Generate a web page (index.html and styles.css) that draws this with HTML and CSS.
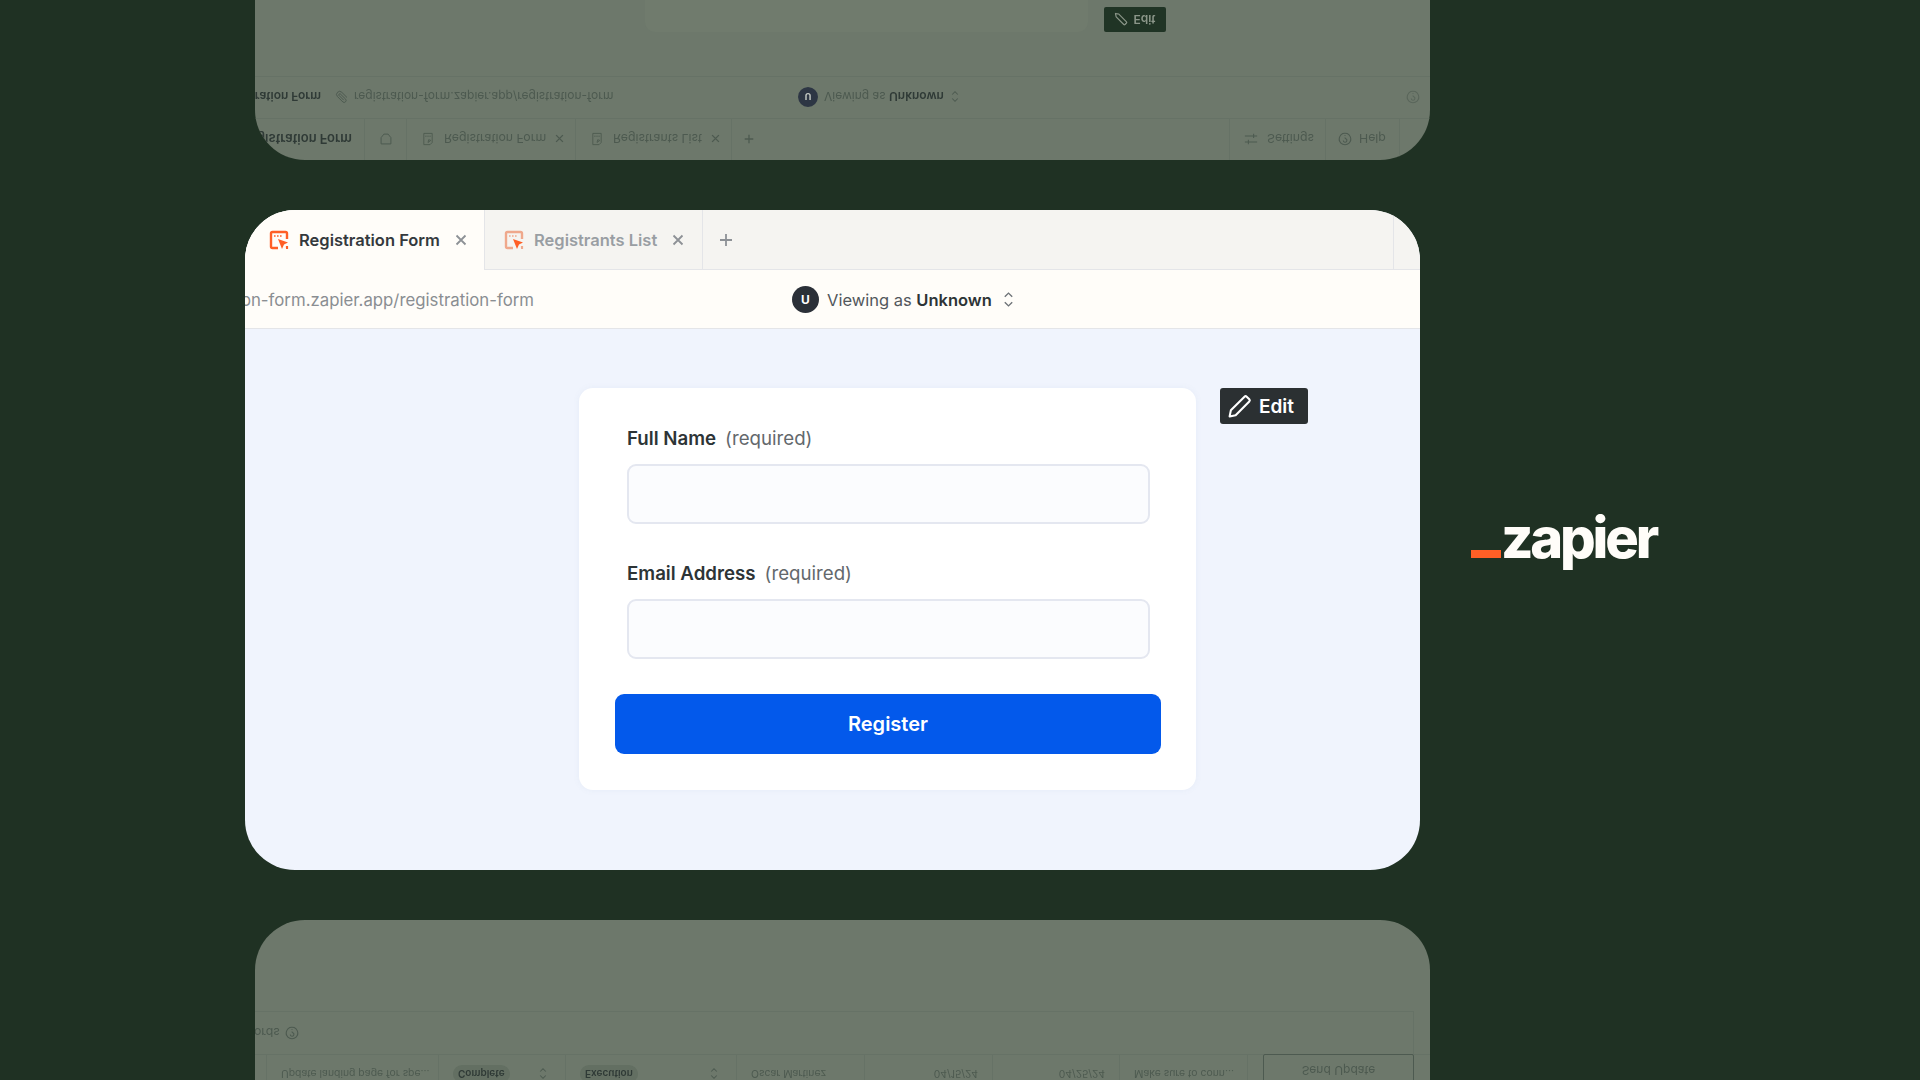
FILE: index.html
```html
<!DOCTYPE html>
<html lang="en">
<head>
    <meta charset="UTF-8">
    <title>Zapier Interfaces - Registration Form</title>
    <link rel="stylesheet" href="styles.css">
</head>
<body>
    <svg class="icon-defs" width="0" height="0">
        <symbol id="page-icon" viewBox="0 0 20 20">
            <path d="M9 18H3.500A1.500 1.500 0 0 1 2 16.500v-13A1.500 1.500 0 0 1 3.500 2h13A1.500 1.500 0 0 1 18 3.500V9" fill="none" stroke="currentColor" stroke-width="2.400"/>
            <path d="M18 16v2h-1" fill="none" stroke="currentColor" stroke-width="2.200"/>
            <path d="M5 6h1.600M8 6h1.600M11 6h1.600" stroke="currentColor" stroke-width="1.600"/>
            <path d="M9 9 19 12.500 15 14.500 13 19z" fill="#ff5f26"/>
        </symbol>
        <symbol id="ghost-page" viewBox="0 0 20 20">
            <path d="M4 2h9l3 3v13H4zM6 14h2M9 14h2M12 14h2M10 5l4 3-3 1z" fill="none" stroke="currentColor" stroke-width="1.300"/>
        </symbol>
        <symbol id="ghost-tag" viewBox="0 0 20 20">
            <path d="M3 3h14v9l-4 5H7l-4-5z" fill="none" stroke="currentColor" stroke-width="1.400"/>
        </symbol>
        <symbol id="close" viewBox="0 0 12 12">
            <path d="M1.500 1.500l9 9M10.500 1.500l-9 9" fill="none" stroke="currentColor" stroke-width="1.800"/>
        </symbol>
        <symbol id="plus" viewBox="0 0 14 14">
            <path d="M7 1v12M1 7h12" fill="none" stroke="currentColor" stroke-width="1.800"/>
        </symbol>
        <symbol id="updown" viewBox="0 0 10 16">
            <path d="M1.500 5.500 5 2l3.500 3.500M1.500 10.500 5 14l3.500-3.500" fill="none" stroke="currentColor" stroke-width="1.300"/>
        </symbol>
        <symbol id="pencil" viewBox="0 0 24 24">
            <path d="M2.500 21.500l1.200-5.800L16.800 2.600a1.500 1.500 0 0 1 2.100 0l2.500 2.500a1.500 1.500 0 0 1 0 2.100L8.300 20.300z" fill="none" stroke="currentColor" stroke-width="2" stroke-linejoin="round"/>
        </symbol>
        <symbol id="help" viewBox="0 0 14 14">
            <circle cx="7" cy="7" r="5.800" fill="none" stroke="currentColor" stroke-width="1.100"/>
            <path d="M5.300 5.500a1.800 1.800 0 1 1 2.500 1.700c-.6.300-.8.600-.8 1.200M7 10v.8" fill="none" stroke="currentColor" stroke-width="1.100"/>
        </symbol>
        <symbol id="sliders" viewBox="0 0 16 14">
            <path d="M1 3.500h14M1 10.500h14" stroke="currentColor" stroke-width="1.200"/>
            <path d="M5 1v5M11 8v5" stroke="currentColor" stroke-width="1.200"/>
        </symbol>
        <symbol id="clip" viewBox="0 0 14 14">
            <path d="M12 6.500 6.800 11.700a3 3 0 0 1-4.300-4.300l5.400-5.400a2 2 0 0 1 2.800 2.800L5.400 10a1 1 0 0 1-1.400-1.400l4.700-4.700" fill="none" stroke="currentColor" stroke-width="1"/>
        </symbol>
    </svg>

    <!-- mirrored window above -->
    <div class="ghost ghost-top">
        <div class="ghost-row ghost-tabs">
            <div class="ghost-cell ghost-title"><b>Registration Form</b></div>
            <div class="ghost-cell ghost-bookmark"><svg class="ico-14"><use href="#ghost-tag"/></svg></div>
            <div class="ghost-cell ghost-tab-a"><svg class="ico-14"><use href="#ghost-page"/></svg><span>Registration Form</span><svg class="ico-9"><use href="#close"/></svg></div>
            <div class="ghost-cell ghost-tab-b"><svg class="ico-14"><use href="#ghost-page"/></svg><span>Registrants List</span><svg class="ico-9"><use href="#close"/></svg></div>
            <div class="ghost-plus"><svg class="ico-10"><use href="#plus"/></svg></div>
            <div class="ghost-cell ghost-settings"><svg class="ico-14"><use href="#sliders"/></svg><span>Settings</span></div>
            <div class="ghost-cell ghost-help"><svg class="ico-14"><use href="#help"/></svg><span>Help</span></div>
        </div>
        <div class="ghost-row ghost-url">
            <div class="ghost-name"><b>Registration Form</b></div>
            <svg class="ico-14"><use href="#clip"/></svg>
            <span class="ghost-link">registration-form.zapier.app/registration-form</span>
            <span class="ghost-avatar">U</span>
            <span class="ghost-viewing">Viewing as <b>Unknown</b></span>
            <svg class="ghost-chev"><use href="#updown"/></svg>
            <svg class="ghost-globe ico-14"><use href="#help"/></svg>
        </div>
        <div class="ghost-body">
            <div class="ghost-card"><b>Full Name</b>&nbsp; (required)</div>
            <div class="ghost-edit"><svg class="ico-14"><use href="#pencil"/></svg>Edit</div>
        </div>
    </div>

    <!-- main window -->
    <div class="window">
        <div class="tabs">
            <div class="tab tab-active">
                <svg class="tab-icon"><use href="#page-icon"/></svg>
                <span>Registration Form</span>
                <svg class="tab-close"><use href="#close"/></svg>
            </div>
            <div class="tab tab-other">
                <svg class="tab-icon"><use href="#page-icon"/></svg>
                <span>Registrants List</span>
                <svg class="tab-close"><use href="#close"/></svg>
            </div>
            <svg class="tab-plus"><use href="#plus"/></svg>
            <div class="tab-end"></div>
        </div>
        <div class="url-bar">
            <div class="url">registration-form.zapier.app/registration-form</div>
            <span class="avatar">U</span>
            <span class="viewing">Viewing as <b>Unknown</b></span>
            <svg class="chevrons"><use href="#updown"/></svg>
        </div>
        <div class="page">
            <form class="card">
                <label class="field-label"><b>Full Name</b><span>(required)</span></label>
                <input class="field" type="text">
                <label class="field-label"><b>Email Address</b><span>(required)</span></label>
                <input class="field" type="text">
                <button class="register" type="button">Register</button>
            </form>
            <div class="edit">
                <svg class="edit-icon"><use href="#pencil"/></svg>
                <span>Edit</span>
            </div>
        </div>
    </div>

    <!-- mirrored window below -->
    <div class="ghost ghost-bottom">
        <div class="ghost-table">
            <div class="td"></div>
            <div class="td">Update landing page for spe...</div>
            <div class="td td-select"><span class="pill">Complete</span><svg class="ghost-chev"><use href="#updown"/></svg></div>
            <div class="td td-select"><span class="pill">Execution</span><svg class="ghost-chev"><use href="#updown"/></svg></div>
            <div class="td">Oscar Martinez</div>
            <div class="td td-date">04/15/24</div>
            <div class="td td-date">04/25/24</div>
            <div class="td">Make sure to conn...</div>
            <div class="td td-action"><span class="send">Send Update</span></div>
        </div>
        <div class="ghost-tools">
            <span class="ghost-records">Records</span>
            <svg class="ico-14"><use href="#help"/></svg>
        </div>
    </div>

    <div class="logo">
        <span class="logo-bar"></span>
        <span class="logo-word">zapier</span>
    </div>
</body>
</html>
```

FILE: styles.css
```css
:root {
    --bg-green: #1f3123;
    --ghost: #6d786b;
    --ghost-line: #667266;
    --ghost-text: #2f3a36;
    --ghost-soft: #4d5a50;
    --tab-bg: #f5f4f1;
    --bar-bg: #fffdf9;
    --page-bg: #f0f4fd;
    --line: #e4e5e8;
    --ink: #2d3436;
    --muted: #8a8f94;
    --orange: #ff5f26;
    --blue: #0359eb;
}

html, body {
    height: 100%;
}

body {
    margin: 0;
    position: relative;
    overflow: hidden;
    background-color: var(--bg-green);
    font-family: Inter, "Liberation Sans", sans-serif;
    color: var(--ink);
}

b {
    font-weight: 600;
}

svg {
    flex: none;
}

.icon-defs {
    position: absolute;
}

/* main window */
.window {
    position: absolute;
    left: 245px;
    top: 210px;
    width: 1175px;
    height: 660px;
    border-radius: 50px;
    overflow: hidden;
    display: flex;
    flex-direction: column;
    background-color: var(--page-bg);
}

.tabs {
    height: 60px;
    flex: none;
    display: flex;
    align-items: stretch;
    background-color: var(--tab-bg);
    box-shadow: inset 0 -1px 0 var(--line);
}

.tab {
    display: flex;
    align-items: center;
    font-size: 16.500px;
    font-weight: 600;
    border-right: 1px solid var(--line);
}

.tab-active {
    width: 240px;
    padding-left: 24px;
    box-sizing: border-box;
    background-color: var(--bar-bg);
    color: #34393d;
}

.tab-other {
    width: 218px;
    padding-left: 19px;
    box-sizing: border-box;
    color: #999ea3;
}

.tab-icon {
    width: 20px;
    height: 20px;
    margin-right: 10px;
    color: var(--orange);
}

.tab-other .tab-icon {
    color: #efa88c;
}

.tab-close {
    width: 12px;
    height: 12px;
    margin-left: 15px;
    color: #8d9196;
}

.tab-plus {
    width: 14px;
    height: 14px;
    margin: 23px 0 0 16px;
    color: #8d9196;
}

.tab-end {
    margin-left: auto;
    width: 26px;
    border-left: 1px solid var(--line);
}

.url-bar {
    height: 59px;
    flex: none;
    display: flex;
    align-items: center;
    background-color: var(--bar-bg);
    box-shadow: inset 0 -1px 0 var(--line);
}

.url {
    width: 289px;
    display: flex;
    justify-content: flex-end;
    white-space: nowrap;
    overflow: hidden;
    font-size: 16.800px;
    padding-top: 1px;
    color: #8a8e92;
}

.avatar {
    width: 27px;
    height: 27px;
    margin-left: 258px;
    border-radius: 50%;
    background-color: #2b3038;
    color: white;
    display: flex;
    align-items: center;
    justify-content: center;
    font-size: 12px;
    font-weight: 700;
}

.viewing {
    margin-left: 8px;
    font-size: 16.500px;
    color: #52575c;
}

.viewing b {
    color: var(--ink);
}

.chevrons {
    width: 11px;
    height: 17px;
    margin-left: 11px;
    color: #6d7277;
}

.page {
    flex: 1;
    display: flex;
    align-items: flex-start;
    gap: 24px;
    padding: 59px 0 0 334px;
}

.card {
    width: 617px;
    height: 402px;
    box-sizing: border-box;
    padding: 37px 46px 0 48px;
    border-radius: 14px;
    background-color: white;
    box-shadow: 0 0 6px rgba(120, 135, 180, 0.08);
}

.field-label {
    display: flex;
    gap: 9px;
    height: 28px;
    align-items: center;
    font-size: 18.700px;
    line-height: 28px;
}

.field-label span {
    color: #63686c;
}

.field {
    display: block;
    width: 100%;
    height: 60px;
    box-sizing: border-box;
    margin: 11px 0 36px;
    border: 2px solid #e4e7f0;
    border-radius: 9px;
    background-color: #fbfcfe;
}

.field:last-of-type {
    margin-bottom: 35px;
}

.register {
    display: block;
    width: 546px;
    height: 60px;
    margin-left: -12px;
    border: none;
    border-radius: 9px;
    background-color: var(--blue);
    color: white;
    font-family: inherit;
    font-size: 20px;
    font-weight: 600;
}

.edit {
    width: 88px;
    height: 36px;
    box-sizing: border-box;
    padding-left: 7px;
    display: flex;
    align-items: center;
    gap: 7px;
    border-radius: 3px;
    background-color: #2b3032;
    color: white;
    font-size: 19px;
    font-weight: 600;
}

.edit-icon {
    width: 25px;
    height: 25px;
}

/* mirrored windows */
.ghost {
    position: absolute;
    left: 255px;
    width: 1175px;
    height: 660px;
    border-radius: 50px;
    overflow: hidden;
    display: flex;
    flex-direction: column;
    background-color: var(--ghost);
    color: var(--ghost-soft);
    font-size: 12.300px;
    transform: scaleY(-1);
    filter: blur(0.5px);
}

.ghost b {
    color: var(--ghost-text);
}

.ghost-top {
    top: -500px;
}

.ghost-bottom {
    top: 920px;
    justify-content: flex-end;
    padding-bottom: 92px;
    box-sizing: border-box;
}

.ico-14 {
    width: 14px;
    height: 14px;
}

.ico-10 {
    width: 10px;
    height: 10px;
}

.ico-9 {
    width: 9px;
    height: 9px;
}

.ghost-row {
    height: 42px;
    flex: none;
    display: flex;
    align-items: center;
    box-shadow: inset 0 -1px 0 var(--ghost-line);
}

.ghost-cell {
    height: 100%;
    box-sizing: border-box;
    display: flex;
    align-items: center;
    gap: 9px;
    border-right: 1px solid var(--ghost-line);
}

.ghost-title {
    width: 110px;
    justify-content: flex-end;
    padding-right: 12px;
    font-size: 13px;
    white-space: nowrap;
}

.ghost-bookmark {
    width: 42px;
    justify-content: center;
}

.ghost-tab-a {
    width: 169px;
    padding-left: 14px;
}

.ghost-tab-b {
    width: 156px;
    padding-left: 14px;
}

.ghost-plus {
    width: 34px;
    padding-left: 12px;
    box-sizing: border-box;
    display: flex;
}

.ghost-settings {
    margin-left: auto;
    width: 97px;
    padding-left: 14px;
    border-left: 1px solid var(--ghost-line);
}

.ghost-help {
    width: 74px;
    padding-left: 12px;
    gap: 7px;
    margin-right: 30px;
}

.ghost-name {
    width: 66px;
    flex: none;
    display: flex;
    justify-content: flex-end;
    font-size: 12px;
    white-space: nowrap;
    margin-right: 14px;
}

.ghost-link {
    margin-left: 5px;
    width: 262px;
    white-space: nowrap;
    font-size: 12px;
}

.ghost-avatar {
    width: 20px;
    height: 20px;
    margin-left: 182px;
    border-radius: 50%;
    background-color: #2d3644;
    color: #c7ccc6;
    display: flex;
    align-items: center;
    justify-content: center;
    font-size: 9px;
    font-weight: 700;
}

.ghost-viewing {
    margin-left: 6px;
    white-space: nowrap;
    font-size: 12px;
}

.ghost-chev {
    width: 8px;
    height: 13px;
    margin-left: 7px;
}

.ghost-globe {
    margin-left: auto;
    margin-right: 10px;
    opacity: 0.6;
}

.ghost-body {
    display: flex;
    align-items: flex-start;
    gap: 16px;
    padding: 44px 0 0 390px;
}

.ghost-card {
    width: 443px;
    height: 200px;
    box-sizing: border-box;
    padding: 30px 0 0 34px;
    border-radius: 10px;
    background-color: #707b6d;
    font-size: 13px;
}

.ghost-edit {
    width: 62px;
    height: 25px;
    display: flex;
    align-items: center;
    justify-content: center;
    gap: 5px;
    border-radius: 2px;
    background-color: #203425;
    color: #8b9689;
    font-size: 12px;
    font-weight: 600;
}

.ghost-table {
    flex: none;
    height: 40px;
    display: grid;
    grid-template-columns: 12px 172px 127px 171px 128px 128px 127px 128px 182px;
    font-size: 10.400px;
    box-shadow: inset 0 -1px 0 var(--ghost-line);
}

.td {
    display: flex;
    align-items: center;
    padding-left: 14px;
    border-right: 1px solid var(--ghost-line);
    white-space: nowrap;
    overflow: hidden;
}

.td:first-child {
    padding-left: 0;
}

.td-select {
    justify-content: space-between;
    padding-right: 18px;
}

.td-date {
    justify-content: flex-end;
    padding-right: 14px;
}

.td-action {
    border-right: none;
    padding-left: 15px;
}

.pill {
    height: 18px;
    padding: 0 5px;
    display: flex;
    align-items: center;
    border-radius: 9px;
    background-color: #636f62;
    color: var(--ghost-text);
    font-size: 10px;
    font-weight: 600;
}

.send {
    width: 151px;
    height: 34px;
    box-sizing: border-box;
    display: flex;
    align-items: center;
    justify-content: center;
    margin-bottom: -6px;
    border: 1px solid #4d5a50;
    border-radius: 2px;
    font-size: 12px;
}

.ghost-tools {
    flex: none;
    height: 42px;
    display: flex;
    align-items: center;
    gap: 5px;
    margin-right: 16px;
    margin-left: -23px;
    border-right: 1px solid var(--ghost-line);
    box-shadow: 0 1px 0 var(--ghost-line);
}

/* logo */
.logo {
    position: absolute;
    left: 1471px;
    top: 498px;
    display: flex;
    align-items: baseline;
}

.logo-bar {
    width: 30px;
    height: 8px;
    margin-right: 0;
    background-color: var(--orange);
}

.logo-word {
    font-size: 56px;
    line-height: 80px;
    font-weight: 800;
    letter-spacing: -3.200px;
    color: #fffdf9;
}
```
